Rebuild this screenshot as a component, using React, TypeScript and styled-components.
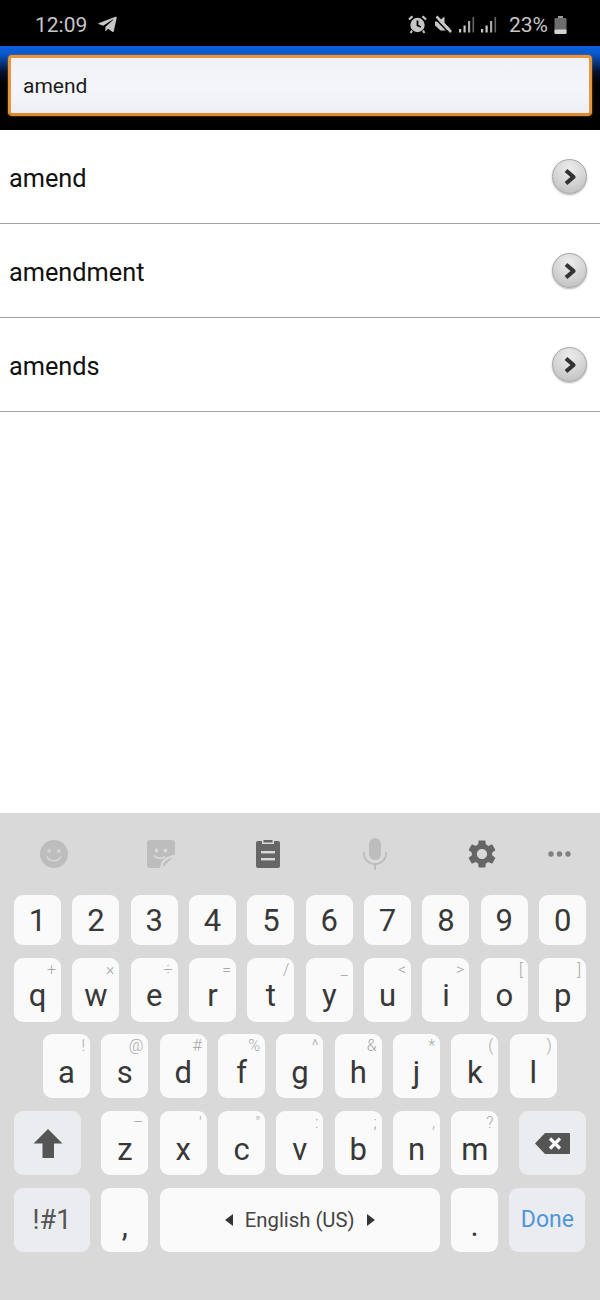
import React from "react";
import styled, { createGlobalStyle } from "styled-components";
import { FaTelegramPlane } from "react-icons/fa";
import { MdSettings } from "react-icons/md";

const Global = createGlobalStyle`
  html, body { margin: 0; padding: 0; background: #fff; }
  * { box-sizing: border-box; }
`;

const Screen = styled.div`
  width: 600px;
  height: 1300px;
  display: flex;
  flex-direction: column;
  overflow: hidden;
  font-family: Roboto, "Liberation Sans", sans-serif;
  background: #fff;
`;

const StatusBar = styled.div`
  height: 46px;
  flex: none;
  background: #000;
  color: #c6c6c6;
  display: flex;
  align-items: center;
  justify-content: space-between;
  padding: 3px 33px 0 35px;
  font-size: 21px;
`;

const StatusGroup = styled.div`
  display: flex;
  align-items: center;
`;

const StatusIcon = styled.svg<{ $gap?: number }>`
  display: block;
  margin-left: ${(p) => p.$gap ?? 0}px;
  flex: none;
`;

const PlaneWrap = styled.span`
  display: flex;
  margin-left: 10px;
  color: #c6c6c6;
  font-size: 21px;
`;

const Percent = styled.span`
  margin-left: 12px;
`;

const SearchHeader = styled.div`
  height: 84px;
  flex: none;
  padding: 9px 8px 14px;
  background: linear-gradient(#0b60dc 0, #0a58cc 8px, #03122e 26px, #000 38px);
`;

const SearchInput = styled.div`
  height: 61px;
  display: flex;
  align-items: center;
  padding: 0 12px;
  border: 3px solid #e7963f;
  border-bottom-color: #de8a33;
  border-radius: 4px;
  background: linear-gradient(#f0f1f6, #f5f6fa 50%, #eeeff3);
  box-shadow: 0 0 2px #c9701f;
  color: #1c1c1c;
  font-size: 21px;
`;

const Results = styled.div`
  flex: 1;
  background: #fff;
`;

const ResultRow = styled.div`
  height: 94px;
  display: flex;
  align-items: center;
  justify-content: space-between;
  padding: 0 13px 0 9px;
  border-bottom: 1px solid #a2a2a2;
  color: #111;
  font-size: 25.3px;
`;

const Word = styled.span`
  padding-top: 4px;
`;

const GoButton = styled.div`
  width: 35px;
  height: 35px;
  border-radius: 50%;
  display: flex;
  align-items: center;
  justify-content: center;
  border: 1px solid #a5a5a5;
  background: radial-gradient(circle at 50% 25%, #ececec 0, #d6d6d6 50%, #b9b9b9 100%);
  box-shadow: 0 1px 2px rgba(0, 0, 0, 0.3);
`;

const Keyboard = styled.div`
  height: 487px;
  flex: none;
  background: #d9d9d9;
`;

const Toolbar = styled.div`
  height: 82px;
  display: flex;
`;

const ToolCell = styled.div<{ $width: number }>`
  width: ${(p) => p.$width}px;
  display: flex;
  align-items: center;
  justify-content: center;
`;

const Rows = styled.div`
  display: flex;
  flex-direction: column;
  gap: 12.7px;
`;

const KeyRow = styled.div<{ $inset?: number }>`
  display: flex;
  gap: 11.35px;
  padding-left: ${(p) => p.$inset ?? 14}px;
`;

const Key = styled.div<{ $width?: number; $height?: number; $push?: number }>`
  position: relative;
  flex: none;
  width: ${(p) => p.$width ?? 47}px;
  height: ${(p) => p.$height ?? 64}px;
  margin-left: ${(p) => p.$push ?? 0}px;
  display: flex;
  align-items: center;
  justify-content: center;
  border-radius: 9px;
  background: #fafafa;
  color: #383838;
  font-size: 31px;
`;

const ActionKey = styled(Key)`
  background: #ebecef;
`;

const Letter = styled.span<{ $drop?: number }>`
  display: block;
  line-height: 1;
  transform: translateY(${(p) => p.$drop ?? 6}px);
`;

const Hint = styled.span`
  position: absolute;
  top: 4px;
  right: 5px;
  color: #a8a8a8;
  font-size: 16px;
  font-weight: 300;
  line-height: 1;
`;

const SpaceLabel = styled.span`
  display: flex;
  align-items: center;
  gap: 12px;
  font-size: 20.3px;
  color: #444;
`;

const SymbolLabel = styled.span`
  font-size: 27px;
  color: #555;
`;

const DoneLabel = styled.span`
  font-size: 23px;
  color: #4f96d8;
`;

const numbers = "1234567890".split("");
const topRow: [string, string][] = [
  ["q", "+"], ["w", "×"], ["e", "÷"], ["r", "="], ["t", "/"],
  ["y", "_"], ["u", "<"], ["i", ">"], ["o", "["], ["p", "]"],
];
const homeRow: [string, string][] = [
  ["a", "!"], ["s", "@"], ["d", "#"], ["f", "%"], ["g", "^"],
  ["h", "&"], ["j", "*"], ["k", "("], ["l", ")"],
];
const bottomRow: [string, string][] = [
  ["x", "'"], ["c", '"'], ["v", ":"], ["b", ";"], ["n", ","], ["m", "?"],
];
const words = ["amend", "amendment", "amends"];

const Chevron = () => (
  <svg width="16" height="18" viewBox="0 0 16 18">
    <path d="M4 2.5 L11.5 9 L4 15.5" fill="none" stroke="#333" strokeWidth="4.2" strokeLinejoin="round" />
  </svg>
);

const AlarmIcon = () => (
  <StatusIcon width="19" height="19" viewBox="0 0 19 19">
    <circle cx="9.5" cy="10" r="7.2" fill="#c6c6c6" />
    <path d="M9.5 5.5V10.5L13 12" fill="none" stroke="#000" strokeWidth="1.8" />
    <path d="M1 4.5 L4.5 1.2 M18 4.5 L14.5 1.2" stroke="#c6c6c6" strokeWidth="2.2" />
    <path d="M4 15.5 L2.6 18 M15 15.5 L16.4 18" stroke="#c6c6c6" strokeWidth="2" />
  </StatusIcon>
);

const MuteIcon = () => (
  <StatusIcon $gap={7} width="18" height="19" viewBox="0 0 18 19">
    <path d="M1 6.5H4.5L10.5 1.5V8L16 13.5L14 15.5H6.5L1 10.5Z" fill="#c6c6c6" />
    <path d="M2.5 1.5 L17 17" stroke="#c6c6c6" strokeWidth="2.6" />
    <path d="M0.8 3 L14.5 17.5" stroke="#000" strokeWidth="1.3" />
  </StatusIcon>
);

const SignalIcon = ({ gap }: { gap: number }) => (
  <StatusIcon $gap={gap} width="16" height="17" viewBox="0 0 16 17">
    <rect x="0" y="13" width="2.2" height="3.5" fill="#c6c6c6" />
    <rect x="4.5" y="9.5" width="2.2" height="7" fill="#c6c6c6" />
    <rect x="9" y="5" width="2.2" height="11.5" fill="#a8a8a8" />
    <rect x="13.5" y="1" width="1.6" height="15.5" fill="#666" />
  </StatusIcon>
);

const BatteryIcon = () => (
  <StatusIcon $gap={6} width="13" height="18" viewBox="0 0 13 18">
    <rect x="4" y="0" width="5" height="2" fill="#9a9a9a" />
    <rect x="0.5" y="2" width="12" height="16" rx="1.2" fill="#6d6d6d" />
    <rect x="0.5" y="13.5" width="12" height="4.5" rx="1" fill="#d2d2d2" />
  </StatusIcon>
);

const SmileyIcon = () => (
  <svg width="28" height="28" viewBox="0 0 28 28">
    <circle cx="14" cy="14" r="14" fill="#bdbdbd" />
    <circle cx="9.2" cy="11" r="2" fill="#d3d3d3" />
    <circle cx="18.8" cy="11" r="2" fill="#d3d3d3" />
    <path d="M7 16.5 C9 22 19 22 21 16.5" fill="none" stroke="#d3d3d3" strokeWidth="2" />
  </svg>
);

const StickerIcon = () => (
  <svg width="28" height="28" viewBox="0 0 28 28">
    <path d="M3 0H25A3 3 0 0 1 28 3V15L15 28H3A3 3 0 0 1 0 25V3A3 3 0 0 1 3 0Z" fill="#bdbdbd" />
    <circle cx="9.5" cy="10.5" r="1.9" fill="#d9d9d9" />
    <circle cx="18.5" cy="10.5" r="1.9" fill="#d9d9d9" />
    <path d="M7 15.5 C9.5 19 15 19 18 16.5" fill="none" stroke="#d9d9d9" strokeWidth="2" />
    <path d="M14.5 28 C14 22 19 17 28 16" fill="none" stroke="#d9d9d9" strokeWidth="2.4" />
  </svg>
);

const ClipboardIcon = () => (
  <svg width="24" height="28" viewBox="0 0 24 28">
    <path d="M2 1H6V4H18V1H22A2 2 0 0 1 24 3V26A2 2 0 0 1 22 28H2A2 2 0 0 1 0 26V3A2 2 0 0 1 2 1Z" fill="#666" />
    <rect x="7.5" y="0" width="9" height="2.5" fill="#666" />
    <rect x="5" y="11" width="14" height="2.4" fill="#d9d9d9" />
    <rect x="5" y="18" width="14" height="2.4" fill="#d9d9d9" />
  </svg>
);

const MicIcon = () => (
  <svg width="24" height="32" viewBox="0 0 24 32">
    <rect x="6" y="0" width="12" height="22" rx="6" fill="#bdbdbd" />
    <path d="M1 14V16A11 10 0 0 0 23 16V14" fill="none" stroke="#bdbdbd" strokeWidth="1.8" />
    <rect x="11" y="25" width="2" height="7" fill="#bdbdbd" />
  </svg>
);

const MoreIcon = () => (
  <svg width="23" height="6" viewBox="0 0 23 6">
    <circle cx="3" cy="3" r="2.7" fill="#808080" />
    <circle cx="11.5" cy="3" r="2.7" fill="#808080" />
    <circle cx="20" cy="3" r="2.7" fill="#808080" />
  </svg>
);

const ShiftIcon = () => (
  <svg width="30" height="30" viewBox="0 0 30 30">
    <path d="M15 1 L29.5 15.5 H21 V30 H9.5 V15.5 H0.5 Z" fill="#555" />
  </svg>
);

const BackspaceIcon = () => (
  <svg width="35" height="21" viewBox="0 0 35 21">
    <path d="M10 0H34A1 1 0 0 1 35 1V20A1 1 0 0 1 34 21H10L0 10.5Z" fill="#555" />
    <path d="M15 5.5 L25 15.5 M25 5.5 L15 15.5" stroke="#fafafa" strokeWidth="3.2" />
  </svg>
);

const Triangle = ({ left }: { left?: boolean }) => (
  <svg width="8" height="12" viewBox="0 0 8 12">
    <path d={left ? "M8 0V12L0 6Z" : "M0 0V12L8 6Z"} fill="#333" />
  </svg>
);

const letterKey = ([ch, hint]: [string, string]) => (
  <Key key={ch}>
    <Letter>{ch}</Letter>
    <Hint>{hint}</Hint>
  </Key>
);

export default function App() {
  return (
    <Screen>
      <Global />
      <StatusBar>
        <StatusGroup>
          <span>12:09</span>
          <PlaneWrap>
            <FaTelegramPlane />
          </PlaneWrap>
        </StatusGroup>
        <StatusGroup>
          <AlarmIcon />
          <MuteIcon />
          <SignalIcon gap={7} />
          <SignalIcon gap={6} />
          <Percent>23%</Percent>
          <BatteryIcon />
        </StatusGroup>
      </StatusBar>

      <SearchHeader>
        <SearchInput>amend</SearchInput>
      </SearchHeader>

      <Results>
        {words.map((w) => (
          <ResultRow key={w}>
            <Word>{w}</Word>
            <GoButton>
              <Chevron />
            </GoButton>
          </ResultRow>
        ))}
      </Results>

      <Keyboard>
        <Toolbar>
          <ToolCell $width={107}><SmileyIcon /></ToolCell>
          <ToolCell $width={107}><StickerIcon /></ToolCell>
          <ToolCell $width={107}><ClipboardIcon /></ToolCell>
          <ToolCell $width={107}><MicIcon /></ToolCell>
          <ToolCell $width={107}><MdSettings size={34} color="#666" /></ToolCell>
          <ToolCell $width={48}><MoreIcon /></ToolCell>
        </Toolbar>
        <Rows>
          <KeyRow>
            {numbers.map((n) => (
              <Key key={n} $height={50}>
                <Letter $drop={0}>{n}</Letter>
              </Key>
            ))}
          </KeyRow>
          <KeyRow>{topRow.map(letterKey)}</KeyRow>
          <KeyRow $inset={43}>{homeRow.map(letterKey)}</KeyRow>
          <KeyRow>
            <ActionKey $width={67}>
              <ShiftIcon />
            </ActionKey>
            <Key $push={9}>
              <Letter>z</Letter>
              <Hint>–</Hint>
            </Key>
            {bottomRow.map(letterKey)}
            <ActionKey $width={67} $push={9}>
              <BackspaceIcon />
            </ActionKey>
          </KeyRow>
          <KeyRow>
            <ActionKey $width={76}>
              <SymbolLabel>!#1</SymbolLabel>
            </ActionKey>
            <Key>
              <Letter>,</Letter>
            </Key>
            <Key $width={280}>
              <SpaceLabel>
                <Triangle left />
                English (US)
                <Triangle />
              </SpaceLabel>
            </Key>
            <Key>
              <Letter>.</Letter>
            </Key>
            <ActionKey $width={76}>
              <DoneLabel>Done</DoneLabel>
            </ActionKey>
          </KeyRow>
        </Rows>
      </Keyboard>
    </Screen>
  );
}
